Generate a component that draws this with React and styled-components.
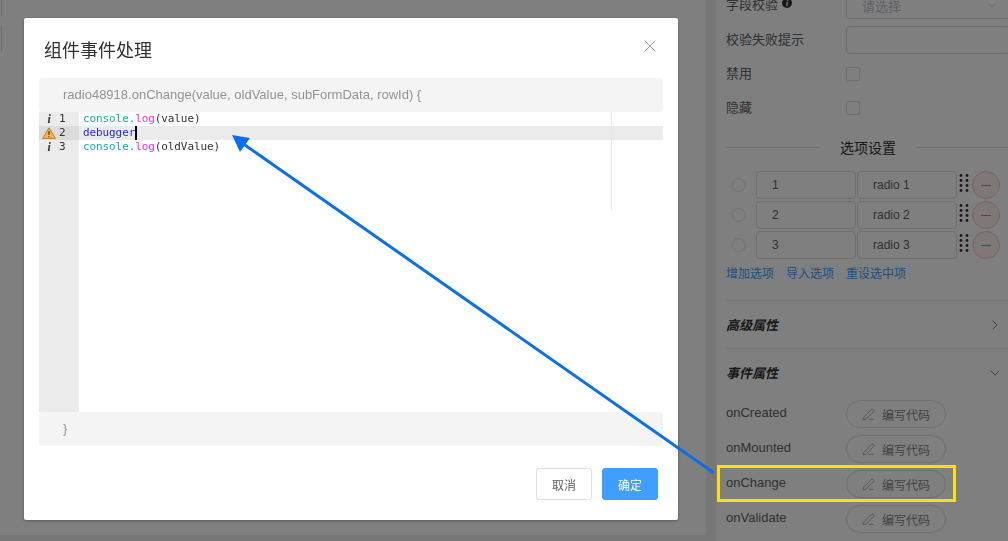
import React from 'react';
import styled, { createGlobalStyle } from 'styled-components';
import { ChevronDown, ChevronRight, PenLine, X } from 'lucide-react';

const GlobalStyle = createGlobalStyle`
  html, body {
    margin: 0;
    height: 100%;
    overflow: hidden;
    background: #fff;
    font-family: "Liberation Sans", "Noto Sans CJK SC", sans-serif;
  }
`;

const Page = styled.div`
  display: flex;
  width: 1008px;
  height: 541px;
  overflow: hidden;
`;

const Canvas = styled.div`
  width: 706px;
  height: 535px;
  flex-shrink: 0;
  background: #fff;
  border-bottom: 6px solid #eee;
`;

const CanvasInput = styled.div`
  width: 1px;
  height: ${(p) => p.$height}px;
  margin-bottom: 10px;
  border-right: 1px solid #dcdfe6;
`;

const Stripe = styled.div`
  width: 10px;
  flex-shrink: 0;
  background: #eeeeee;
`;

const Panel = styled.div`
  width: 284px;
  flex-shrink: 0;
  padding: 0 10px;
  margin-top: -9px;
  color: #606266;
  font-size: 13px;
`;

const Row = styled.div`
  display: flex;
  align-items: center;
  height: 28px;
  margin-bottom: ${(p) => p.$gap ?? 7}px;
`;

const Label = styled.label`
  display: flex;
  align-items: center;
  gap: 4px;
  width: 120px;
  flex-shrink: 0;
  position: relative;
  top: -2px;
`;

const InfoDot = styled.span`
  display: inline-flex;
  align-items: center;
  justify-content: center;
  width: 10px;
  height: 10px;
  border-radius: 50%;
  background: #303133;
  color: #fff;
  font: italic bold 8px "Liberation Serif", serif;
`;

const Field = styled.div`
  display: flex;
  align-items: center;
  justify-content: space-between;
  width: 164px;
  height: 28px;
  flex-shrink: 0;
  padding: 0 10px 0 15px;
  box-sizing: border-box;
  border: 1px solid #dcdfe6;
  border-radius: 4px;
  color: #c0c4cc;
  background: #fff;
`;

const Check = styled.span`
  width: 12px;
  height: 12px;
  border: 1px solid #dcdfe6;
  border-radius: 2px;
  background: #fff;
`;

const Divider = styled.div`
  display: flex;
  align-items: center;
  gap: 20px;
  margin: 15px 0 14px;
  height: 20px;
  color: #303133;
  font-size: 14px;

  &::before,
  &::after {
    content: '';
    flex: 1;
    height: 1px;
    background: #dcdfe6;
  }
`;

const OptionRow = styled.div`
  display: flex;
  align-items: center;
  height: 28px;
  margin-bottom: 2px;
`;

const Radio = styled.span`
  width: 12px;
  height: 12px;
  margin: 0 10px 0 6px;
  border: 1px solid #dcdfe6;
  border-radius: 50%;
  background: #fff;
`;

const OptionInput = styled.div`
  display: flex;
  align-items: center;
  width: 100px;
  height: 28px;
  flex-shrink: 0;
  margin-right: 1px;
  padding-left: 15px;
  box-sizing: border-box;
  border: 1px solid #dcdfe6;
  border-radius: 4px;
  color: #606266;
  font-size: 12px;
`;

const Grip = styled.svg`
  width: 12px;
  height: 18px;
  margin: 0 2px 4px 0;
  flex-shrink: 0;
`;

const MinusButton = styled.span`
  display: flex;
  align-items: center;
  justify-content: center;
  width: 26px;
  height: 26px;
  flex-shrink: 0;
  border: 1px solid #fbc4c4;
  border-radius: 50%;
  background: #fef0f0;

  &::before {
    content: '';
    width: 10px;
    height: 1px;
    background: #f56c6c;
  }
`;

const Links = styled.div`
  display: flex;
  gap: 12px;
  height: 20px;
  margin: 3px 0 18px;
  align-items: center;
  color: #409eff;
  font-size: 12px;
`;

const Collapse = styled.div`
  display: flex;
  align-items: center;
  justify-content: space-between;
  height: 47px;
  padding-right: 7px;
  border-top: 1px solid #e6ebf5;
  color: #303133;
  font-size: 13px;
  font-weight: bold;
  font-style: italic;

  svg {
    color: #606266;
  }
`;

const EventList = styled.div`
  margin-top: 4px;
`;

const CodeButton = styled.span`
  display: flex;
  align-items: center;
  justify-content: center;
  gap: 7px;
  width: 100px;
  height: 28px;
  box-sizing: border-box;
  border: 1px solid #dcdfe6;
  border-radius: 14px;
  background: #fff;
  color: #83868c;
  font-size: 12px;
`;

const Overlay = styled.div`
  position: fixed;
  inset: 0;
  background: rgba(0, 0, 0, 0.5);
`;

const Dialog = styled.div`
  position: fixed;
  left: 24px;
  top: 18px;
  width: 654px;
  height: 502px;
  display: flex;
  flex-direction: column;
  background: #fff;
  border-radius: 2px;
  box-shadow: 0 1px 3px rgba(0, 0, 0, 0.3);
`;

const DialogHeader = styled.div`
  display: flex;
  align-items: center;
  justify-content: space-between;
  height: 60px;
  box-sizing: border-box;
  padding: 2px 18px 0 20px;
  color: #303133;
  font-size: 18px;

  svg {
    color: #909399;
    margin-bottom: 6px;
  }
`;

const DialogBody = styled.div`
  display: flex;
  flex-direction: column;
  margin: 0 15px;
`;

const CodeBand = styled.div`
  display: flex;
  align-items: center;
  height: ${(p) => p.$height}px;
  padding: 0 0 2px ${(p) => p.$indent}px;
  box-sizing: border-box;
  background: #f4f4f5;
  border-radius: 4px;
  color: #909399;
  font-size: 13px;
`;

const Editor = styled.div`
  display: flex;
  height: 300px;
  font: 11px/14px "DejaVu Sans Mono", monospace;
  letter-spacing: -0.1px;
`;

const Gutter = styled.div`
  width: 40px;
  flex-shrink: 0;
  background: #ebebeb;
  color: #333;
`;

const GutterCell = styled.div`
  display: flex;
  align-items: center;
  height: 14px;
  padding-left: 3px;
  background: ${(p) => (p.$active ? '#dcdcdc' : 'transparent')};
`;

const Marker = styled.span`
  display: flex;
  justify-content: center;
  width: 14px;
  margin-right: 3px;
  font: italic bold 12px "Liberation Serif", serif;
`;

const CodeArea = styled.div`
  flex: 1;
  position: relative;
`;

const CodeLine = styled.div`
  height: 14px;
  padding-left: 4px;
  color: #333;
  white-space: pre;
  background: ${(p) => (p.$active ? '#ebebeb' : 'transparent')};
`;

const Ident = styled.span`
  color: #1fa8b3;
`;

const Method = styled.span`
  color: #e535e5;
`;

const Keyword = styled.span`
  color: #2a2ae0;
`;

const Cursor = styled.span`
  display: inline-block;
  width: 2px;
  height: 14px;
  vertical-align: top;
  background: #000;
`;

const PrintMargin = styled.div`
  position: absolute;
  left: 532px;
  top: 0;
  width: 1px;
  height: 98px;
  background: #e8e8e8;
`;

const DialogFooter = styled.div`
  display: flex;
  justify-content: flex-end;
  gap: 10px;
  padding: 22px 20px 0;
`;

const FooterButton = styled.button`
  width: 56px;
  height: 32px;
  padding: 0;
  border: 1px solid ${(p) => (p.$primary ? '#409eff' : '#dcdfe6')};
  border-radius: 3px;
  background: ${(p) => (p.$primary ? '#409eff' : '#fff')};
  color: ${(p) => (p.$primary ? '#fff' : '#606266')};
  font-family: inherit;
  font-size: 12px;
`;

const ArrowLayer = styled.svg`
  position: fixed;
  inset: 0;
  width: 1008px;
  height: 541px;
  pointer-events: none;
`;

const Highlight = styled.div`
  position: fixed;
  left: 717px;
  top: 465px;
  width: 233px;
  height: 31px;
  border: 3px solid #ffdc14;
`;

const options = [
  ['1', 'radio 1'],
  ['2', 'radio 2'],
  ['3', 'radio 3'],
];

const events = ['onCreated', 'onMounted', 'onChange', 'onValidate'];

const GripIcon = () => (
  <Grip viewBox="0 0 12 18">
    {[2, 7, 12, 17].map((y) =>
      [3, 9].map((x) => <circle key={`${x}-${y}`} cx={x} cy={y - 0.5} r="1.4" fill="#333" />)
    )}
  </Grip>
);

const WarnIcon = () => (
  <svg width="14" height="12" viewBox="0 0 14 12">
    <path d="M7 .8 13.4 11.4H.6Z" fill="#f5b451" stroke="#b9801f" strokeWidth="1" strokeLinejoin="round" />
    <path d="M7 4v4M7 9.2v1" stroke="#4a3410" strokeWidth="1.2" />
  </svg>
);

const App = () => (
  <>
    <GlobalStyle />
    <Page>
      <Canvas>
        <CanvasInput $height={16} />
        <CanvasInput $height={26} />
      </Canvas>
      <Stripe />
      <Panel>
        <Row>
          <Label>
            字段校验 <InfoDot>i</InfoDot>
          </Label>
          <Field>
            请选择 <ChevronDown size={14} strokeWidth={1.2} />
          </Field>
        </Row>
        <Row $gap={6}>
          <Label>校验失败提示</Label>
          <Field />
        </Row>
        <Row $gap={6}>
          <Label>禁用</Label>
          <Check />
        </Row>
        <Row $gap={6}>
          <Label>隐藏</Label>
          <Check />
        </Row>
        <Divider>选项设置</Divider>
        {options.map(([value, label]) => (
          <OptionRow key={value}>
            <Radio />
            <OptionInput>{value}</OptionInput>
            <OptionInput>{label}</OptionInput>
            <GripIcon />
            <MinusButton />
          </OptionRow>
        ))}
        <Links>
          <span>增加选项</span>
          <span>导入选项</span>
          <span>重设选中项</span>
        </Links>
        <Collapse>
          高级属性 <ChevronRight size={16} strokeWidth={1.2} />
        </Collapse>
        <Collapse>
          事件属性 <ChevronDown size={16} strokeWidth={1.2} />
        </Collapse>
        <EventList>
          {events.map((name) => (
            <Row key={name}>
              <Label>{name}</Label>
              <CodeButton>
                <PenLine size={13} strokeWidth={1.2} /> 编写代码
              </CodeButton>
            </Row>
          ))}
        </EventList>
      </Panel>
    </Page>
    <Overlay />
    <Dialog>
      <DialogHeader>
        组件事件处理 <X size={20} strokeWidth={1} />
      </DialogHeader>
      <DialogBody>
        <CodeBand $height={34} $indent={24}>
          radio48918.onChange(value, oldValue, subFormData, rowId) {'{'}
        </CodeBand>
        <Editor>
          <Gutter>
            <GutterCell>
              <Marker>i</Marker>1
            </GutterCell>
            <GutterCell $active>
              <Marker>
                <WarnIcon />
              </Marker>
              2
            </GutterCell>
            <GutterCell>
              <Marker>i</Marker>3
            </GutterCell>
          </Gutter>
          <CodeArea>
            <CodeLine>
              <Ident>console.</Ident>
              <Method>log</Method>(value)
            </CodeLine>
            <CodeLine $active>
              <Keyword>debugger</Keyword>
              <Cursor />
            </CodeLine>
            <CodeLine>
              <Ident>console.</Ident>
              <Method>log</Method>(oldValue)
            </CodeLine>
            <PrintMargin />
          </CodeArea>
        </Editor>
        <CodeBand $height={34} $indent={24}>
          {'}'}
        </CodeBand>
      </DialogBody>
      <DialogFooter>
        <FooterButton>取消</FooterButton>
        <FooterButton $primary>确定</FooterButton>
      </DialogFooter>
    </Dialog>
    <Highlight />
    <ArrowLayer viewBox="0 0 1008 541">
      <line x1="714" y1="473" x2="242" y2="143" stroke="#0d6fe8" strokeWidth="3" />
      <path d="M232 135 250 138 240 152Z" fill="#0d6fe8" />
    </ArrowLayer>
  </>
);

export default App;
